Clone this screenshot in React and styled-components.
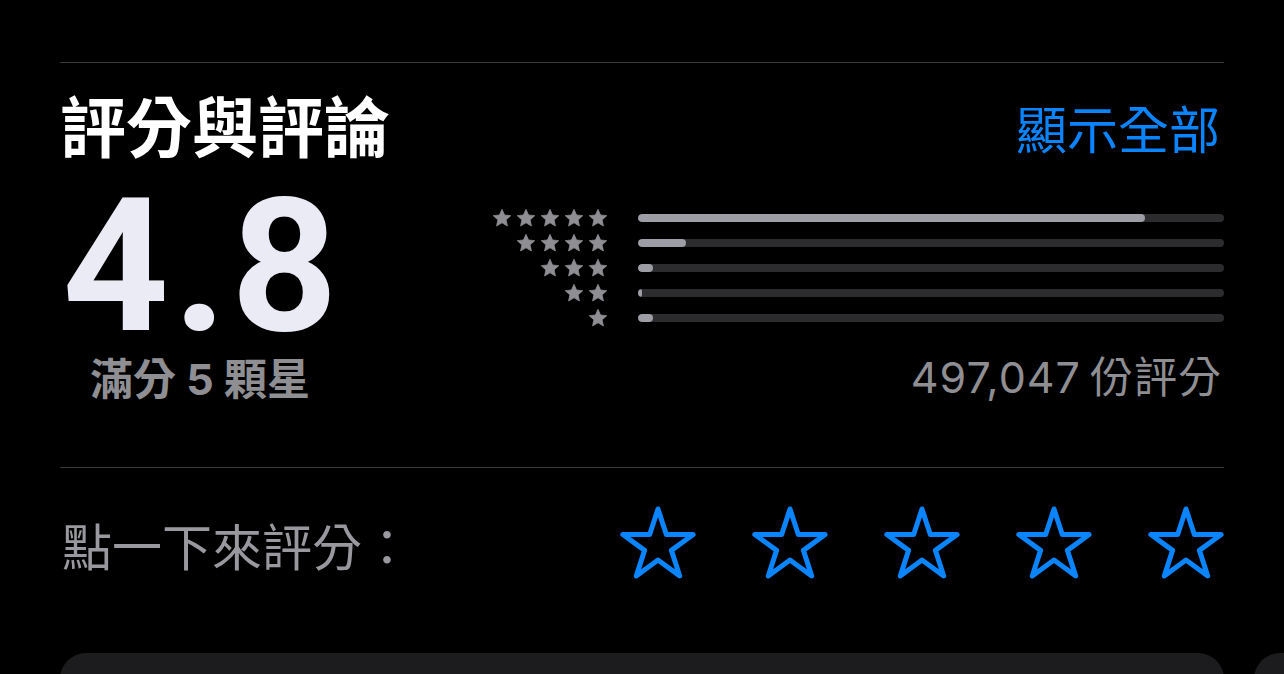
import React from "react";
import styled, { createGlobalStyle } from "styled-components";

const GlobalStyle = createGlobalStyle`
  html, body {
    margin: 0;
    padding: 0;
    background: #000;
  }
  body {
    font-family: "Inter", "Noto Sans CJK TC", sans-serif;
    color: #fff;
    overflow: hidden;
  }
`;

const histogram = [
  { stars: 5, pct: 86.5 },
  { stars: 4, pct: 8.2 },
  { stars: 3, pct: 2.6 },
  { stars: 2, pct: 0.6 },
  { stars: 1, pct: 2.6 },
];

const STAR_POINTS =
  "40,3 48.29,28.59 75.19,28.57 53.41,44.36 61.75,69.93 40,54.1 18.25,69.93 26.59,44.36 4.81,28.57 31.71,28.59";

const FAT_STAR_POINTS =
  "40,5 50.23,27.92 75.19,30.57 56.55,47.38 61.75,71.93 40,59.4 18.25,71.93 23.45,47.38 4.81,30.57 29.77,27.92";

const SmallStar = () => (
  <svg width="20" height="19" viewBox="0 0 80 76">
    <polygon
      points={FAT_STAR_POINTS}
      fill="#8e8e93"
      stroke="#8e8e93"
      strokeWidth="3"
      strokeLinejoin="round"
    />
  </svg>
);

const OutlineStar = () => (
  <svg width="80" height="76" viewBox="0 0 80 76">
    <polygon
      points={STAR_POINTS}
      fill="none"
      stroke="#0a84ff"
      strokeWidth="5"
      strokeLinejoin="round"
    />
  </svg>
);

const App = () => {
  return (
    <>
      <GlobalStyle />
      <Page>
        <Divider />
        <Header>
          <Title>評分與評論</Title>
          <ShowAll>顯示全部</ShowAll>
        </Header>
        <Summary>
          <ScoreBlock>
            <Score>4.8</Score>
            <OutOf>滿分 5 顆星</OutOf>
          </ScoreBlock>
          <Breakdown>
            <Histogram>
              {histogram.map((row) => (
                <HistRow key={row.stars}>
                  <StarGroup>
                    {Array.from({ length: row.stars }).map((_, i) => (
                      <SmallStar key={i} />
                    ))}
                  </StarGroup>
                  <Track>
                    <Fill style={{ width: `${row.pct}%` }} />
                  </Track>
                </HistRow>
              ))}
            </Histogram>
            <Count>497,047 份評分</Count>
          </Breakdown>
        </Summary>
        <Divider $top={60} />
        <RateRow>
          <RateLabel>點一下來評分：</RateLabel>
          <RateStars>
            {[0, 1, 2, 3, 4].map((i) => (
              <OutlineStar key={i} />
            ))}
          </RateStars>
        </RateRow>
        <Cards>
          <Card />
          <Card />
        </Cards>
      </Page>
    </>
  );
};

export default App;

const Page = styled.div`
  width: 1164px;
  padding: 0 60px;
`;

const Divider = styled.div`
  height: 1px;
  background: #38383a;
  margin-top: ${(p) => (p.$top !== undefined ? p.$top : 62)}px;
`;

const Header = styled.div`
  display: flex;
  justify-content: space-between;
  align-items: flex-start;
  margin-top: 20px;
`;

const Title = styled.h2`
  margin: 0;
  font-family: "Noto Sans CJK TC", sans-serif;
  font-weight: 700;
  font-size: 66px;
  line-height: 80px;
  color: #fff;
`;

const ShowAll = styled.span`
  font-family: "Noto Sans CJK TC", sans-serif;
  font-size: 51px;
  line-height: 60px;
  color: #0a84ff;
  margin-top: 14px;
  margin-right: 4px;
`;

const Summary = styled.div`
  display: flex;
  align-items: flex-start;
  margin-top: 18px;
`;

const ScoreBlock = styled.div`
  width: 280px;
  display: flex;
  flex-direction: column;
  align-items: center;
`;

const Score = styled.div`
  font-family: "Roboto", "Liberation Sans", sans-serif;
  font-weight: 700;
  font-size: 186px;
  line-height: 170px;
  letter-spacing: 4px;
  padding-left: 4px;
  color: #ebebf5;
`;

const OutOf = styled.div`
  font-family: "Inter", "Noto Sans CJK TC", sans-serif;
  font-weight: 700;
  font-size: 43px;
  line-height: 56px;
  color: #8e8e93;
`;

const Breakdown = styled.div`
  flex: 1;
  display: flex;
  flex-direction: column;
  align-items: flex-end;
  padding-top: 24px;
`;

const Histogram = styled.div`
  width: 736px;
  display: flex;
  flex-direction: column;
`;

const HistRow = styled.div`
  height: 25px;
  display: flex;
  align-items: center;
  gap: 30px;
`;

const StarGroup = styled.div`
  width: 120px;
  display: flex;
  justify-content: flex-end;
  gap: 4px;
`;

const Track = styled.div`
  flex: 1;
  height: 8px;
  border-radius: 4px;
  background: #2c2c2e;
  overflow: hidden;
`;

const Fill = styled.div`
  height: 100%;
  min-width: 3px;
  border-radius: 4px;
  background: #9d9da5;
`;

const Count = styled.div`
  font-family: "Inter", "Noto Sans CJK TC", sans-serif;
  font-size: 43px;
  line-height: 56px;
  letter-spacing: 1px;
  word-spacing: -4px;
  color: #8e8e93;
  margin-top: 19px;
  margin-right: 2px;
`;

const RateRow = styled.div`
  display: flex;
  justify-content: space-between;
  align-items: center;
  margin-top: 38px;
`;

const RateLabel = styled.div`
  font-family: "Noto Sans CJK TC", sans-serif;
  font-size: 50px;
  line-height: 60px;
  color: #98989e;
  margin-left: 2px;
`;

const RateStars = styled.div`
  display: flex;
  gap: 52px;
  margin-right: -2px;
`;

const Cards = styled.div`
  display: flex;
  gap: 30px;
  margin-top: 71px;
  width: 2400px;
`;

const Card = styled.div`
  width: 1164px;
  height: 200px;
  flex-shrink: 0;
  background: #1c1c1e;
  border-radius: 26px;
`;
